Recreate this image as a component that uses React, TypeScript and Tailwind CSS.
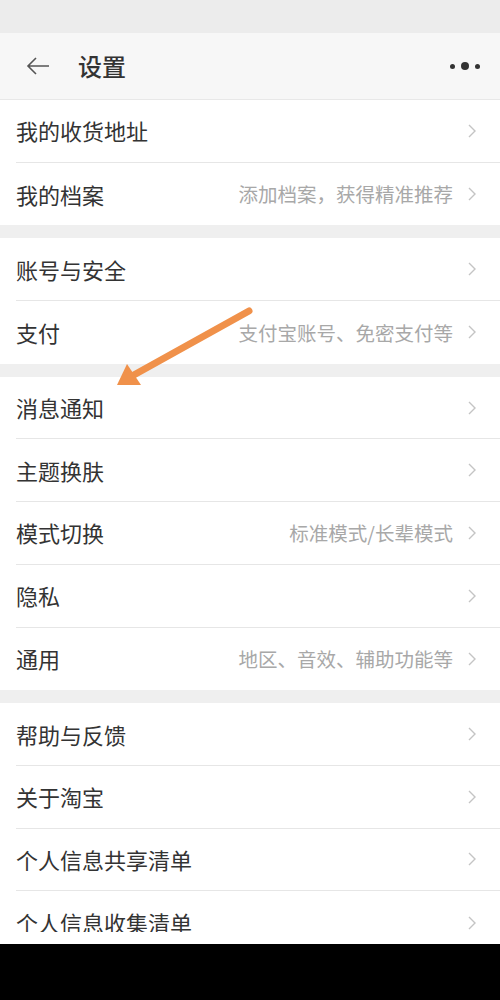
import React from "react";

type Item = { label: string; hint?: string };

const groups: Item[][] = [
  [{ label: "我的收货地址" }, { label: "我的档案", hint: "添加档案，获得精准推荐" }],
  [{ label: "账号与安全" }, { label: "支付", hint: "支付宝账号、免密支付等" }],
  [
    { label: "消息通知" },
    { label: "主题换肤" },
    { label: "模式切换", hint: "标准模式/长辈模式" },
    { label: "隐私" },
    { label: "通用", hint: "地区、音效、辅助功能等" },
  ],
  [
    { label: "帮助与反馈" },
    { label: "关于淘宝" },
    { label: "个人信息共享清单" },
    { label: "个人信息收集清单" },
  ],
];

const Chevron = () => (
  <svg width="10" height="16" viewBox="0 0 10 16" className="shrink-0">
    <polyline points="2,2 8,8 2,14" fill="none" stroke="#c4c4c4" strokeWidth="1.4" />
  </svg>
);

const Row = ({ item, last }: { item: Item; last: boolean }) => (
  <div className="h-[62.7px] flex bg-white pl-4">
    <div
      className={`flex flex-1 items-center pr-[23px] ${last ? "" : "border-b border-[#e6e6e6]"}`}
    >
      <span className="flex-1 text-[22px] text-[#333]">{item.label}</span>
      {item.hint && <span className="text-[19.5px] text-[#a8a8a8] mr-[14px]">{item.hint}</span>}
      <Chevron />
    </div>
  </div>
);

export default function App() {
  return (
    <div
      className="relative w-[500px] h-[1000px] flex flex-col bg-[#efefef] overflow-hidden"
      style={{ fontFamily: '"Noto Sans CJK SC", "Noto Sans", sans-serif' }}
    >
      <div className="h-[33px] bg-[#ececec] shrink-0" />
      <div className="h-[67px] shrink-0 bg-[#f7f7f7] border-b border-[#e8e8e8] flex items-center pl-[26px] pr-5">
        <svg width="24" height="20" viewBox="0 0 24 20">
          <path d="M23 10H2M10 2L2 10l8 8" fill="none" stroke="#555" strokeWidth="1.6" />
        </svg>
        <span className="ml-[28px] text-[24px] text-[#333] font-medium flex-1">设置</span>
        <div className="flex items-center gap-[6px]">
          <span className="w-[5px] h-[5px] rounded-full bg-[#333]" />
          <span className="w-[8px] h-[8px] rounded-full bg-[#333]" />
          <span className="w-[5px] h-[5px] rounded-full bg-[#333]" />
        </div>
      </div>
      <div className="h-[832px] shrink-0 overflow-hidden flex flex-col gap-[13px]">
        {groups.map((g, gi) => (
          <div key={gi} className="flex flex-col shrink-0">
            {g.map((item, i) => (
              <Row key={item.label} item={item} last={i === g.length - 1} />
            ))}
          </div>
        ))}
      </div>
      <div className="h-[12px] bg-white shrink-0" />
      <div className="flex-1 bg-black" />

      <svg className="absolute left-0 top-0 pointer-events-none" width="500" height="1000">
        <line x1="249" y1="311" x2="132" y2="376" stroke="#f0914a" strokeWidth="7" strokeLinecap="round" />
        <polygon points="117,385 127,364 141,385" fill="#f0914a" />
      </svg>
    </div>
  );
}
